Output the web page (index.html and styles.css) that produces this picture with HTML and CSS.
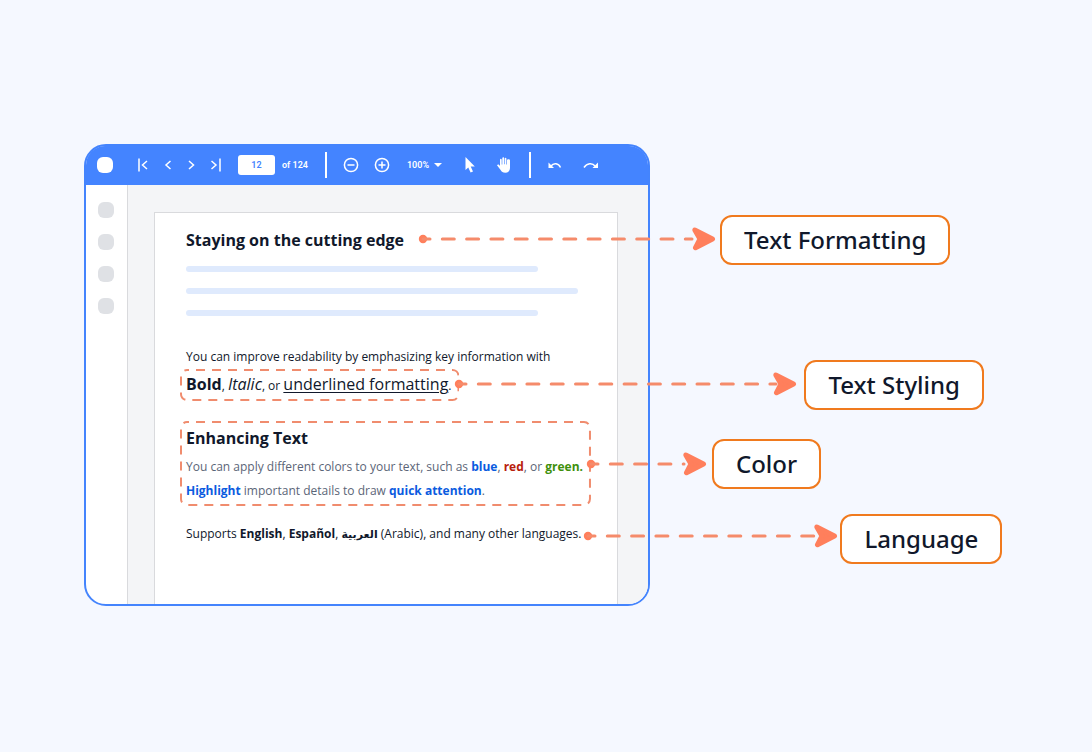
FILE: index.html
```
<!DOCTYPE html>
<html lang="en">
<head>
    <meta charset="utf-8">
    <title>PDF Viewer - Rich Text</title>
    <link rel="stylesheet" href="styles.css">
</head>
<body>
    <main class="scene">
        <section class="viewer">
            <div class="toolbar">
                <span class="logo"></span>

                <div class="nav">
                    <button aria-label="First page"><svg viewBox="0 0 16 16"><path class="line" d="M4 1.500V14.500M12 4L7.500 8L12 12"/></svg></button>
                    <button aria-label="Previous page"><svg viewBox="0 0 16 16"><path class="line" d="M11.500 4L7 8L11.500 12"/></svg></button>
                    <button aria-label="Next page"><svg viewBox="0 0 16 16"><path class="line" d="M6 4L10.500 8L6 12"/></svg></button>
                    <button aria-label="Last page"><svg viewBox="0 0 16 16"><path class="line" d="M4.500 4L9 8L4.500 12M13 1.500V14.500"/></svg></button>
                </div>

                <div class="pager">
                    <input type="text" value="12" aria-label="Page number">
                    <span>of 124</span>
                </div>

                <span class="divider"></span>

                <div class="zoom">
                    <button aria-label="Zoom out"><svg viewBox="0 0 16 16"><circle class="line" cx="8" cy="8" r="6.600"/><path class="line" d="M4.500 8H11.500"/></svg></button>
                    <button aria-label="Zoom in"><svg viewBox="0 0 16 16"><circle class="line" cx="8" cy="8" r="6.600"/><path class="line" d="M4.500 8H11.500M8 4.500V11.500"/></svg></button>
                    <button class="zoom-level">100% <span class="caret"></span></button>
                </div>

                <div class="tools">
                    <button aria-label="Select"><svg viewBox="0 0 16 16"><path d="M3.500 0V13L6.300 10.500L8.600 15.600L11 14.500L8.700 9.600H12.800Z"/></svg></button>
                    <button aria-label="Pan"><svg viewBox="0 0 16 16"><path d="M4 2.800C4 1.500 5.700 1.500 5.700 2.800V7.500H6.300V1.300C6.300 0 8.100 0 8.100 1.300V7.200H8.700V1.600C8.700.4 10.400.4 10.400 1.600V7.500H11V3.300C11 2 14 2.100 14 3.400V10.500C14 14 12 15.800 9.300 15.800C6.700 15.800 5.700 14.800 4.600 13L1 8.300C1.600 7.300 2.600 7.500 3.200 8L4 8.900Z"/></svg></button>
                </div>

                <span class="divider"></span>

                <div class="history">
                    <button aria-label="Undo"><svg viewBox="0 0 16 16"><path class="line" d="M4 9C6.500 5.700 11.500 5.800 13.500 10.500"/><path d="M1.500 5.500V11H7Z"/></svg></button>
                    <button aria-label="Redo"><svg viewBox="0 0 16 16"><path class="line" d="M12 9C9.500 5.700 4 5.800 1 10.500"/><path d="M15 5.500V11H9.500Z"/></svg></button>
                </div>
            </div>

            <div class="workspace">
                <aside class="sidebar">
                    <span></span>
                    <span></span>
                    <span></span>
                    <span></span>
                </aside>

                <div class="canvas">
                    <article class="page">
                        <h2 class="anchor">
                            Staying on the cutting edge
                            <span class="callout callout-formatting">
                                <svg width="302" height="50">
                                    <circle cx="5" cy="24" r="4.200"/>
                                    <path class="dash" d="M5 24H274"/>
                                    <path class="head" d="M294.500 24L276.800 15L282 24L277.500 32.700Z"/>
                                </svg>
                                <strong>Text Formatting</strong>
                            </span>
                        </h2>

                        <div class="lines">
                            <span></span>
                            <span class="long"></span>
                            <span></span>
                        </div>

                        <p>You can improve readability by emphasizing key information with</p>
                        <div class="anchor marked styling">
                            <svg class="outline"><rect x="1" y="1" rx="6"/></svg>
                            <p><b>Bold</b>, <i>Italic</i>, or <u>underlined formatting</u>.</p>
                            <span class="callout">
                                <svg width="350" height="50">
                                    <circle cx="5" cy="24" r="4.200"/>
                                    <path class="dash" d="M5 24H322"/>
                                    <path class="head" d="M339.500 24L321.800 15L327 24L322.500 32.700Z"/>
                                </svg>
                                <strong>Text Styling</strong>
                            </span>
                        </div>

                        <div class="anchor marked colors">
                            <svg class="outline"><rect x="1" y="1" rx="6"/></svg>
                            <h2>Enhancing Text</h2>
                            <p>You can apply different colors to your text, such as <b class="blue">blue</b>, <b class="red">red</b>, or <b class="green">green.</b><br>
                            <b class="blue">Highlight</b> important details to draw <b class="blue">quick attention</b>.</p>
                            <span class="callout">
                                <svg width="126" height="50">
                                    <circle cx="5" cy="25" r="4.200"/>
                                    <path class="dash" d="M5 25H98"/>
                                    <path class="head" d="M117.500 25L99.800 16L105 25L100.500 33.700Z"/>
                                </svg>
                                <strong>Color</strong>
                            </span>
                        </div>

                        <p class="anchor languages">
                            Supports <b>English</b>, <b>Español</b>, <b lang="ar">العربية</b> (Arabic), and many other languages.
                            <span class="callout callout-language">
                                <svg width="257" height="50">
                                    <circle cx="5" cy="22" r="4.200"/>
                                    <path class="dash" d="M5 22H233"/>
                                    <path class="head" d="M251.500 22L233.800 13L239 22L234.500 30.700Z"/>
                                </svg>
                                <strong>Language</strong>
                            </span>
                        </p>
                    </article>
                </div>
            </div>
        </section>
    </main>
</body>
</html>
```
FILE: styles.css
```
* {
    box-sizing: border-box;
}
body {
    margin: 0;
    background-color: #f5f8ff;
    color: #10182b;
    font-family: "Open Sans", "Noto Sans", "DejaVu Sans", sans-serif;
    font-size: 12px;
    line-height: 24px;
}
h2, p {
    margin: 0;
}
h2 {
    font-size: 16px;
    font-weight: 700;
}
button {
    display: flex;
    align-items: center;
    padding: 0;
    border: 0;
    background: none;
    color: #fff;
    font: inherit;
}
.scene {
    /* the right side is left free for the callout labels */
    padding: 144px 442px 144px 84px;
}
.viewer {
    display: flex;
    flex-direction: column;
    min-width: 566px;
    min-height: 462px;
    border: 2px solid #4484fd;
    border-radius: 22px;
    background-color: #fff;
}

/* Toolbar */
.toolbar {
    display: flex;
    align-items: center;
    height: 39px;
    padding: 0 0 2px 11px;
    border-radius: 19px 19px 0 0;
    background-color: #4484ff;
    color: #fff;
    font-family: Roboto, sans-serif;
    font-size: 9px;
    font-weight: 600;
}
.toolbar svg {
    width: 16px;
    height: 16px;
    fill: #fff;
}
.toolbar .line {
    fill: none;
    stroke: #fff;
    stroke-width: 1.5;
}
.logo {
    width: 16px;
    height: 16px;
    border-radius: 6px;
    background-color: #fff;
}
.nav, .pager, .zoom, .tools, .history {
    display: flex;
    align-items: center;
}
.nav {
    gap: 8px;
    margin-left: 22px;
}
.pager {
    gap: 7px;
    margin-left: 15px;
}
.pager input {
    width: 37px;
    height: 20px;
    padding: 0;
    border: 0;
    border-radius: 3px;
    background-color: #fff;
    color: #4484ff;
    font: inherit;
    text-align: center;
}
.divider {
    width: 2px;
    height: 26px;
    margin: 0 16px 0 17px;
    background-color: #fff;
}
.zoom {
    gap: 15px;
}
.zoom-level {
    gap: 5px;
    margin-left: 2px;
}
.caret {
    border: 4px solid transparent;
    border-top-color: #fff;
    border-bottom: 0;
}
.tools {
    gap: 18px;
    margin-left: 20px;
}
.history {
    gap: 20px;
}

/* Workspace */
.workspace {
    display: flex;
    flex: 1;
}
.sidebar {
    display: flex;
    flex: none;
    flex-direction: column;
    gap: 16px;
    width: 42px;
    padding: 17px 0 0 12px;
    border-right: 1px solid #d9dadd;
}
.sidebar span {
    width: 16px;
    height: 16px;
    border-radius: 6px;
    background-color: #dfe1e5;
}
.canvas {
    display: flex;
    flex: 1;
    min-width: 0;
    padding: 27px 30px 0 26px;
    border-radius: 0 0 20px 0;
    background-color: #f4f5f7;
}
.page {
    flex: 1;
    min-width: 0;
    padding: 15px 31px 0;
    border: 1px solid #d9dadd;
    border-bottom: 0;
    background-color: #fff;
    white-space: nowrap;
}
.lines {
    display: flex;
    flex-direction: column;
    gap: 16px;
    margin: 14px 0 29px;
}
.lines span {
    width: 88%;
    height: 6px;
    border-radius: 3px;
    background-color: #dfeafd;
}
.lines .long {
    width: 98%;
}

/* Marked areas */
.anchor {
    position: relative;
    width: max-content;
}
.marked {
    margin-left: -6px;
    padding: 5px 8px 3px 6px;
}
.outline {
    position: absolute;
    inset: 0;
    width: 100%;
    height: 100%;
}
.outline rect {
    width: calc(100% - 2px);
    height: calc(100% - 2px);
    fill: none;
    stroke: #f08c6e;
    stroke-width: 2;
    stroke-dasharray: 9 7;
    stroke-dashoffset: 7;
}
.styling b, .styling i, .styling u {
    font-size: 16px;
    line-height: 16px;
}
.styling u {
    text-decoration-thickness: 1px;
    text-underline-offset: 2px;
}
.colors {
    margin-top: 20px;
}
.colors p {
    margin-top: 5px;
    color: #5b6577;
}
.languages {
    margin-top: 16px;
}
.languages [lang="ar"] {
    font-size: 11px;
}
.blue {
    color: #0a5be0;
}
.red {
    color: #b8200c;
}
.green {
    color: #40900c;
}

/* Callouts */
.callout {
    position: absolute;
    top: 50%;
    left: calc(100% - 5px);
    display: flex;
    transform: translateY(-50%);
}
.callout-formatting {
    left: calc(100% + 14px);
}
.callout-language {
    top: 17px;
    left: calc(100% + 2px);
}
.callout svg {
    flex: none;
    fill: #ff7f5c;
}
.callout .dash {
    fill: none;
    stroke: #f58b6b;
    stroke-width: 3;
    stroke-linecap: round;
    stroke-dasharray: 12 12.3;
    stroke-dashoffset: 5;
}
.callout .head {
    stroke: #ff7f5c;
    stroke-width: 5;
    stroke-linejoin: round;
}
.callout strong {
    padding: 0 22px;
    border: 2px solid #f07a1e;
    border-radius: 12px;
    background-color: #fff;
    font-family: "Noto Sans", "Open Sans", sans-serif;
    font-size: 24px;
    font-weight: 500;
    line-height: 46px;
}
```
